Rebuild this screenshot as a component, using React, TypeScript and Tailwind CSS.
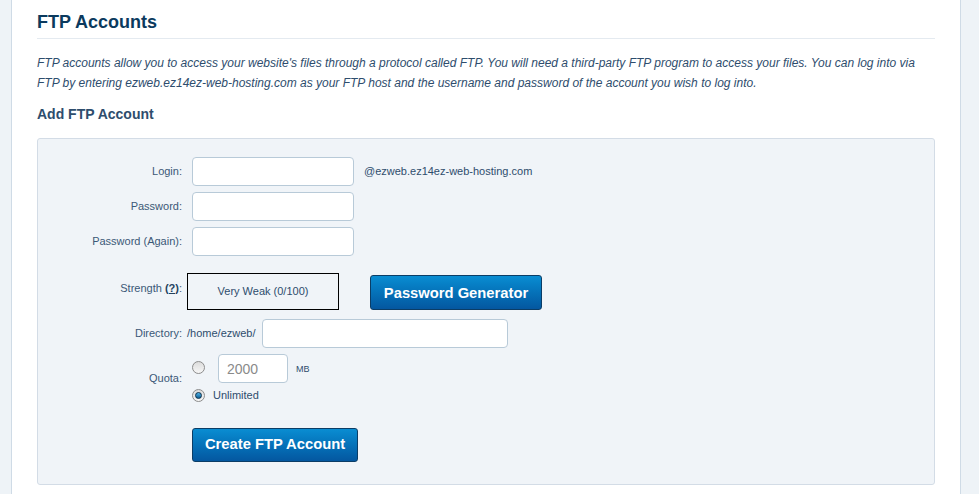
import React from "react";

const font = { fontFamily: '"Liberation Sans", Arial, sans-serif' };

const Field = ({ w = "w-[162px]" }: { w?: string }) => (
  <input
    type="text"
    className={`${w} h-[29px] rounded-[4px] border border-[#b8cad8] bg-white px-2 outline-none`}
  />
);

const Label = ({ children }: { children: React.ReactNode }) => (
  <div className="w-[144px] shrink-0 text-right text-[11px] text-[#3b5877]">
    {children}
  </div>
);

const Radio = ({ checked }: { checked?: boolean }) => (
  <span className="flex h-[13px] w-[13px] items-center justify-center rounded-full border border-[#8c8c8c] bg-gradient-to-b from-[#dcdcdc] to-[#f7f7f7]">
    {checked && (
      <span className="h-[7px] w-[7px] rounded-full border border-[#0b2f4a] bg-gradient-to-b from-[#4fb3e8] to-[#0d5f94]" />
    )}
  </span>
);

const BlueButton = ({
  children,
  className,
}: {
  children: React.ReactNode;
  className: string;
}) => (
  <button
    className={`${className} rounded-[3px] border border-[#0b3d66] bg-gradient-to-b from-[#0a8dd2] to-[#0457a0] text-[14.75px] font-bold text-white`}
  >
    {children}
  </button>
);

export default function App() {
  return (
    <div className="flex h-[494px] w-full overflow-hidden bg-white" style={font}>
      <div className="w-[12px] shrink-0 border-r border-[#cfdbe6] bg-[#eef3f7]" />
      <div className="flex-1 px-[25px]">
        <div className="border-b border-[#e4eaf0] pb-[4px] pt-[10px] text-[18px] font-bold leading-[24px] text-[#0b3a5e]">
          FTP Accounts
        </div>
        <p className="mt-[14px] text-[12px] italic leading-[20px] text-[#2e4d6d]">
          FTP accounts allow you to access your website's files through a protocol called FTP. You
          will need a third-party FTP program to access your files. You can log into via FTP by
          entering ezweb.ez14ez-web-hosting.com as your FTP host and the username and password of
          the account you wish to log into.
        </p>
        <div className="mt-[11px] text-[14px] font-bold leading-[20px] text-[#2e4d6d]">
          Add FTP Account
        </div>

        <div className="mt-[14px] rounded-[3px] border border-[#d3dce6] bg-[#f0f4f8] pb-[22px] pt-[18px]">
          <div className="flex flex-col">
            <div className="flex items-center">
              <Label>Login:</Label>
              <div className="ml-[10px] flex items-center">
                <Field />
                <span className="ml-[10px] text-[11px] text-[#2e4d6d]">
                  @ezweb.ez14ez-web-hosting.com
                </span>
              </div>
            </div>
            <div className="mt-[6px] flex items-center">
              <Label>Password:</Label>
              <div className="ml-[10px]">
                <Field />
              </div>
            </div>
            <div className="mt-[6px] flex items-center">
              <Label>Password (Again):</Label>
              <div className="ml-[10px]">
                <Field />
              </div>
            </div>

            <div className="mt-[17px] flex items-center">
              <div className="-mt-[7px] w-[144px] shrink-0 text-right text-[11px] text-[#3b5877]">
                Strength{" "}
                <span className="font-bold text-[#23425f] underline">(?)</span>:
              </div>
              <div className="ml-[5px] flex h-[37px] w-[152px] items-center justify-center border border-black text-[11px] text-[#2e4d6d]">
                Very Weak (0/100)
              </div>
              <BlueButton className="ml-[31px] mt-[2px] h-[35px] w-[172px] pt-[2px]">
                Password Generator
              </BlueButton>
            </div>

            <div className="mt-[9px] flex items-center">
              <Label>Directory:</Label>
              <span className="ml-[5px] text-[11px] text-[#2e4d6d]">/home/ezweb/</span>
              <div className="ml-[7px]">
                <Field w="w-[246px]" />
              </div>
            </div>

            <div className="mt-[6px] flex items-start">
              <div className="mt-[16px] w-[144px] shrink-0 text-right text-[11px] text-[#3b5877]">
                Quota:
              </div>
              <div className="ml-[10px] flex flex-col">
                <div className="flex items-center">
                  <div className="-mt-[2px]">
                    <Radio />
                  </div>
                  <input
                    type="text"
                    defaultValue="2000"
                    className="ml-[13px] h-[29px] w-[70px] rounded-[4px] border border-[#b8cad8] bg-white px-[8px] text-[14px] text-[#8a8a8a] outline-none"
                  />
                  <span className="ml-[8px] mt-[2px] text-[9px] text-[#2e4d6d]">MB</span>
                </div>
                <div className="mt-[4px] flex items-center">
                  <Radio checked />
                  <span className="ml-[8px] text-[11px] text-[#2e4d6d]">Unlimited</span>
                </div>
              </div>
            </div>

            <div className="mt-[24px] flex">
              <div className="w-[154px] shrink-0" />
              <BlueButton className="h-[34px] w-[166px]">Create FTP Account</BlueButton>
            </div>
          </div>
        </div>
      </div>
      <div className="w-[19px] shrink-0 border-l border-[#cfdbe6] bg-[#eef3f7]" />
    </div>
  );
}
